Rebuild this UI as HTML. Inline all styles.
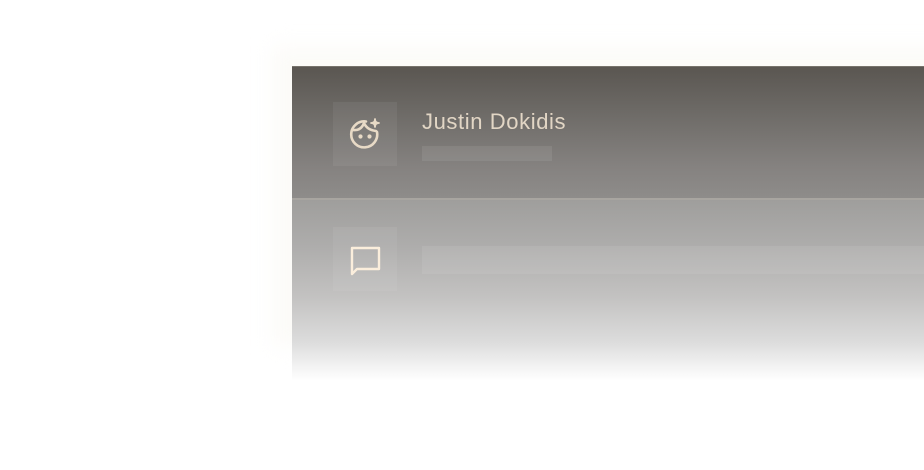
<!DOCTYPE html>
<html><head><style>
html,body{margin:0;padding:0;width:924px;height:470px;background:#fff;overflow:hidden;font-family:"Liberation Sans",sans-serif;}
.sh{position:absolute;left:272px;top:46px;width:700px;height:300px;background:#fcfbf8;filter:blur(10px);}
.panel{position:absolute;left:292px;top:66px;width:640px;height:318px;
background:linear-gradient(to bottom,#5a5651 0px,#6b6864 40px,#858280 100px,#8e8c8a 131px,#9f9e9c 133px,#aeadac 180px,#c3c2c1 230px,#dcdcdc 275px,#f3f3f3 300px,#ffffff 314px);
border-top:1px solid #77736c;}
.line{position:absolute;left:0;right:0;top:131px;height:2px;background:#a8a5a0;}
.box{position:absolute;left:41px;width:64px;height:64px;background:rgba(255,255,255,0.06);}
.name{position:absolute;left:130px;top:42px;font-size:22px;color:#e2d6c5;letter-spacing:0.6px;}
.bar1{position:absolute;left:130px;top:79px;width:130px;height:15px;background:rgba(255,255,255,0.08);}
.bar2{position:absolute;left:130px;top:179px;width:520px;height:28px;background:rgba(255,255,255,0.08);}
</style></head><body>
<div class="sh"></div>
<div class="panel">
  <div class="box" style="top:35px">
    <svg width="64" height="64" viewBox="0 0 64 64" fill="none" stroke="#e8dac6" stroke-width="2.6" stroke-linecap="round" stroke-linejoin="round">
      <path d="M44 30 A13 13 0 1 1 33 19.5"/>
      <path d="M20 28 Q28 29 31 21 Q34 28 43 29"/>
      <circle cx="27.5" cy="34.5" r="0.8" fill="#e8dac6"/>
      <circle cx="36.5" cy="34.5" r="0.8" fill="#e8dac6"/>
      <path d="M42 17 Q42 21 46 21 Q42 21 42 25 Q42 21 38 21 Q42 21 42 17 Z" stroke-width="1.8" fill="#e8dac6"/>
    </svg>
  </div>
  <div class="name">Justin Dokidis</div>
  <div class="bar1"></div>
  <div class="line"></div>
  <div class="box" style="top:160px">
    <svg width="64" height="64" viewBox="0 0 64 64" fill="none" stroke="#fbeedc" stroke-width="2.4" stroke-linejoin="round">
      <path d="M19 21 H46 V42 H24 L19 47 Z"/>
    </svg>
  </div>
  <div class="bar2"></div>
</div>
</body></html>
